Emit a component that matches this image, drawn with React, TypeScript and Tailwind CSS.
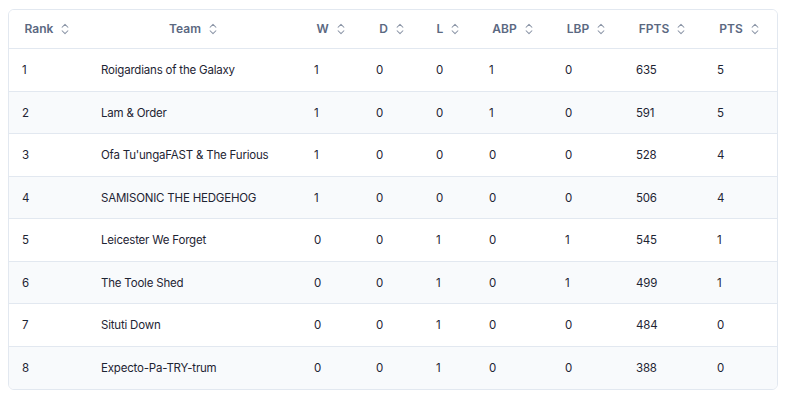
import React from "react";

const cols = ["Rank", "Team", "W", "D", "L", "ABP", "LBP", "FPTS", "PTS"];
const rows: (string | number)[][] = [
  [1, "Roigardians of the Galaxy", 1, 0, 0, 1, 0, 635, 5],
  [2, "Lam & Order", 1, 0, 0, 1, 0, 591, 5],
  [3, "Ofa Tu'ungaFAST & The Furious", 1, 0, 0, 0, 0, 528, 4],
  [4, "SAMISONIC THE HEDGEHOG", 1, 0, 0, 0, 0, 506, 4],
  [5, "Leicester We Forget", 0, 0, 1, 0, 1, 545, 1],
  [6, "The Toole Shed", 0, 0, 1, 0, 1, 499, 1],
  [7, "Situti Down", 0, 0, 1, 0, 0, 484, 0],
  [8, "Expecto-Pa-TRY-trum", 0, 0, 1, 0, 0, 388, 0],
];

const grid = "grid grid-cols-[79px_213px_62px_60px_53px_76px_71px_81px_73px]";

function SortIcon() {
  return (
    <svg width="14" height="14" viewBox="0 0 24 24" fill="none" stroke="#8a94a6" strokeWidth="1.8" strokeLinecap="round" strokeLinejoin="round" className="ml-[5px]">
      <path d="m7 15 5 5 5-5" />
      <path d="m7 9 5-5 5 5" />
    </svg>
  );
}

export default function App() {
  return (
    <div className="bg-white w-[785px] h-[397px] pt-[9px] pl-2" style={{ fontFamily: "Inter, 'Liberation Sans', sans-serif" }}>
      <div className="w-[770px] border border-[#e2e8f0] rounded-md overflow-hidden">
        <div className={`${grid} h-[39px] border-b border-[#e2e8f0] bg-white`}>
          {cols.map((c) => (
            <div key={c} className="flex items-center justify-center text-[12px] font-semibold text-[#5b6881]">
              <span>{c}</span>
              <SortIcon />
            </div>
          ))}
        </div>
        {rows.map((r, i) => (
          <div
            key={i}
            className={`${grid} h-[42.5px] ${i < rows.length - 1 ? "border-b border-[#e2e8f0]" : ""} ${i % 2 === 1 ? "bg-[#f8fafc]" : "bg-white"}`}
          >
            {r.map((v, j) => (
              <div key={j} className="flex items-center pl-[13px] pt-[2px] text-[11.5px] tracking-[-0.2px] text-[#1e2433] whitespace-nowrap">
                {v}
              </div>
            ))}
          </div>
        ))}
      </div>
    </div>
  );
}
